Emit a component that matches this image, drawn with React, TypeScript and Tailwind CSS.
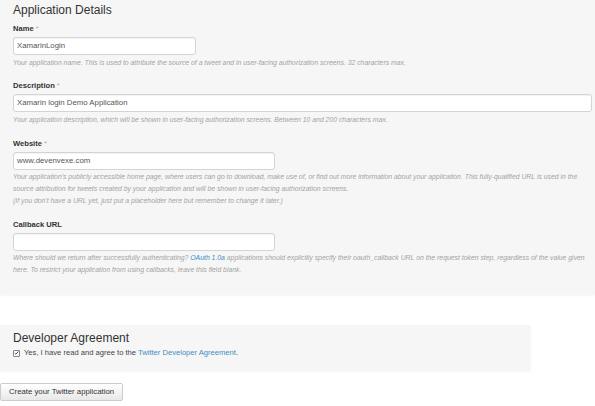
import { ReactNode } from 'react'

const font = { fontFamily: '"Liberation Sans", Arial, sans-serif' }

function Field({
  label,
  required,
  gap,
  helpGap,
  inputWidth,
  value,
  help,
}: {
  label: string
  required?: boolean
  gap: string
  helpGap: string
  inputWidth: string
  value?: string
  help: ReactNode
}) {
  return (
    <div className={gap}>
      <div className="text-[7.6px] font-bold leading-[12px] text-[#333]">
        {label}
        {required && <span className="ml-[2px] font-normal text-[#e59a9a]">*</span>}
      </div>
      <div
        className={`${inputWidth} mt-[2px] flex h-[18px] items-center rounded-[3px] border border-[#d4d4d4] bg-white px-[3px] text-[7.8px] text-[#555] shadow-[inset_0_1px_1px_rgba(0,0,0,0.05)]`}
      >
        {value}
      </div>
      <div className={`${helpGap} whitespace-nowrap text-[6.85px] italic leading-[12px] text-[#a3a3a3]`}>{help}</div>
    </div>
  )
}

export default function App() {
  return (
    <div className="h-[406px] w-[595px] overflow-hidden bg-white" style={font}>
      {/* application details */}
      <section className="bg-[#f6f6f6] px-[13px] pb-[19px] pt-px shadow-[0_1px_2px_rgba(0,0,0,0.04)]">
        <h2 className="text-[12px] leading-[18px] text-[#333]">Application Details</h2>

        <Field
          label="Name"
          required
          gap="mt-[4px]"
          helpGap="mt-[2px]"
          inputWidth="w-[183px]"
          value="XamarinLogin"
          help="Your application name. This is used to attribute the source of a tweet and in user-facing authorization screens. 32 characters max."
        />
        <Field
          label="Description"
          required
          gap="mt-[11px]"
          helpGap="mt-[2px]"
          inputWidth="w-[579px]"
          value="Xamarin login Demo Application"
          help="Your application description, which will be shown in user-facing authorization screens. Between 10 and 200 characters max."
        />
        <Field
          label="Website"
          required
          gap="mt-[12px]"
          helpGap="mt-[1px]"
          inputWidth="w-[262px]"
          value="www.devenvexe.com"
          help={
            <>
              Your application's publicly accessible home page, where users can go to download, make use of, or find out more information about your application. This fully-qualified URL is used in the
              <br />
              source attribution for tweets created by your application and will be shown in user-facing authorization screens.
              <br />
              (If you don't have a URL yet, just put a placeholder here but remember to change it later.)
            </>
          }
        />
        <Field
          label="Callback URL"
          gap="mt-[12px]"
          helpGap="mt-[1px]"
          inputWidth="w-[262px]"
          help={
            <>
              Where should we return after successfully authenticating? <span className="text-[#3b8dc5]">OAuth 1.0a</span> applications should explicitly specify their oauth_callback URL on the request token step, regardless of the value given
              <br />
              here. To restrict your application from using callbacks, leave this field blank.
            </>
          }
        />
      </section>

      {/* developer agreement */}
      <section className="mt-[30px] w-[530px] bg-[#f6f6f6] px-[13px] pb-[12px] pt-[4px] shadow-[1px_1px_2px_rgba(0,0,0,0.04)]">
        <h2 className="text-[12px] leading-[18px] text-[#333]">Developer Agreement</h2>
        <label className="flex items-center gap-[4px] text-[7.6px] leading-[12px] text-[#444]">
          <span className="flex h-[7px] w-[7px] items-center justify-center rounded-[1px] border border-[#888] bg-white">
            <svg viewBox="0 0 8 8" className="h-[6px] w-[6px]">
              <path d="M1.2 4.2 3.1 6 6.8 1.6" fill="none" stroke="#333" strokeWidth="1.4" />
            </svg>
          </span>
          <span>
            Yes, I have read and agree to the <span className="text-[#3b8dc5]">Twitter Developer Agreement</span>.
          </span>
        </label>
      </section>

      <button className="mt-[12px] flex h-[18px] w-[123px] items-center justify-center rounded-[2px] border border-[#ccc] bg-gradient-to-b from-white to-[#e8e8e8] text-[7.8px] text-[#333]">
        Create your Twitter application
      </button>
    </div>
  )
}
